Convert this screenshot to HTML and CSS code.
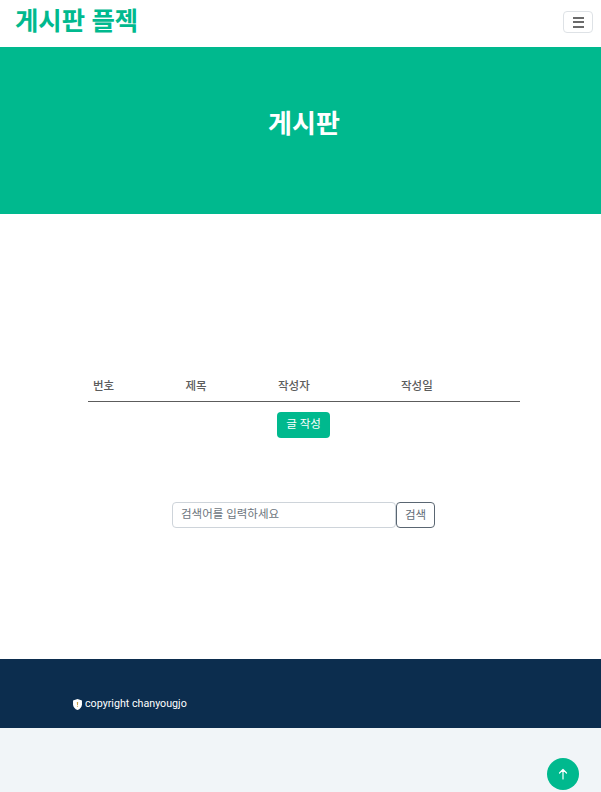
FILE: index.html
```html
<!DOCTYPE html>
<html lang="ko">
<head>
    <meta charset="UTF-8">
    <meta name="viewport" content="width=device-width, initial-scale=1.0">
    <title>게시판 플젝</title>
    <link rel="stylesheet" href="styles.css">
</head>
<body>
    <nav class="navbar">
        <a class="brand" href="#">게시판 플젝</a>
        <button class="toggler" type="button" aria-label="메뉴">
            <span></span><span></span><span></span>
        </button>
    </nav>

    <header class="hero">
        <h1>게시판</h1>
    </header>

    <main class="board">
        <table class="board-table">
            <thead>
                <tr>
                    <th class="col-no">번호</th>
                    <th class="col-title">제목</th>
                    <th class="col-writer">작성자</th>
                    <th>작성일</th>
                </tr>
            </thead>
        </table>
        <a class="write-btn" href="#">글 작성</a>

        <form class="search">
            <input class="search-input" type="text" placeholder="검색어를 입력하세요">
            <button class="search-btn" type="button">검색</button>
        </form>
    </main>

    <footer class="footer">
        <div class="copyright">
            <svg class="shield" viewBox="0 0 16 16" width="11" height="11">
                <path fill="#fff" d="M8 0 1.5 2.2v5.3c0 4 2.8 7 6.5 8.5 3.7-1.5 6.5-4.5 6.5-8.5V2.2z"/>
                <path fill="#c9a24a" d="M7 4.5h2l-.3 4.2H7.3zM7.2 9.8h1.6v1.6H7.2z"/>
            </svg>
            <span>copyright chanyougjo</span>
        </div>
    </footer>
    <div class="page-end"></div>

    <a class="to-top" href="#" aria-label="맨 위로">
        <svg viewBox="0 0 16 16" width="16" height="16">
            <path fill="none" stroke="#fff" stroke-width="1.2" stroke-linecap="round" stroke-linejoin="round" d="M8 13V3.5M4.5 7 8 3.5 11.5 7"/>
        </svg>
    </a>
</body>
</html>
```

FILE: styles.css
```css
* {
    box-sizing: border-box;
}
body {
    margin: 0;
    height: 792px;
    overflow: hidden;
    display: flex;
    flex-direction: column;
    font-family: Roboto, "Noto Sans CJK KR", sans-serif;
    color: #5c5c5c;
    background-color: #fff;
}
.navbar {
    height: 47px;
    padding: 0 8px 0 15px;
    display: flex;
    align-items: flex-start;
    justify-content: space-between;
}
.brand {
    font-size: 25.4px;
    font-weight: 700;
    line-height: 42px;
    color: #00b98e;
    text-decoration: none;
}
.toggler {
    width: 30px;
    height: 22px;
    margin-top: 11px;
    padding: 0;
    display: flex;
    flex-direction: column;
    align-items: center;
    justify-content: center;
    gap: 2.5px;
    background: #fff;
    border: 1px solid #dee2e6;
    border-radius: 4px;
}
.toggler span {
    width: 11px;
    height: 2px;
    background-color: #6b6b6b;
}
.hero {
    height: 167px;
    padding: 57px 0 0 7px;
    background-color: #00b98e;
    text-align: center;
}
.hero h1 {
    margin: 0;
    font-size: 26px;
    font-weight: 700;
    line-height: 40px;
    color: #fff;
}
.board {
    height: 445px;
    padding: 157px 82px 0 88px;
    display: flex;
    flex-direction: column;
    align-items: center;
}
.board-table {
    align-self: flex-start;
    width: 432px;
    flex-shrink: 0;
    border-collapse: collapse;
    table-layout: fixed;
}
.board-table th {
    padding: 0 5px 2px;
    height: 30px;
    font-size: 11.5px;
    font-weight: 500;
    text-align: left;
    color: #5c5c5c;
    border-bottom: 1px solid #5c5c5c;
}
.col-no,
.col-title {
    width: 92.5px;
}
.col-writer {
    width: 123px;
}
.write-btn {
    margin-top: 10px;
    width: 53px;
    height: 26px;
    font-size: 11.5px;
    line-height: 25px;
    text-align: center;
    color: #fff;
    text-decoration: none;
    background-color: #00b98e;
    border-radius: 4px;
}
.search {
    margin-top: 64px;
    display: flex;
}
.search-input {
    width: 224px;
    height: 26px;
    padding: 0 8px 1px;
    font-family: inherit;
    font-size: 11.5px;
    color: #5c5c5c;
    border: 1px solid #ced4da;
    border-radius: 4px;
}
.search-input::placeholder {
    color: #6c757d;
    opacity: 1;
}
.search-btn {
    width: 39px;
    height: 26px;
    padding: 0 0 1px;
    font-family: inherit;
    font-size: 11.5px;
    color: #5f6b76;
    background: #fff;
    border: 1px solid #5a6672;
    border-radius: 4px;
}
.footer {
    height: 69px;
    padding: 38px 0 0 72px;
    background-color: #0c2d4e;
}
.copyright {
    display: flex;
    align-items: center;
    gap: 2px;
    font-size: 10.7px;
    line-height: 14px;
    color: #fff;
}
.page-end {
    flex: 1;
    background-color: #f1f5f8;
}
.to-top {
    position: fixed;
    right: 22px;
    bottom: 2px;
    width: 32px;
    height: 32px;
    display: flex;
    align-items: center;
    justify-content: center;
    background-color: #00b98e;
    border-radius: 50%;
}
```
